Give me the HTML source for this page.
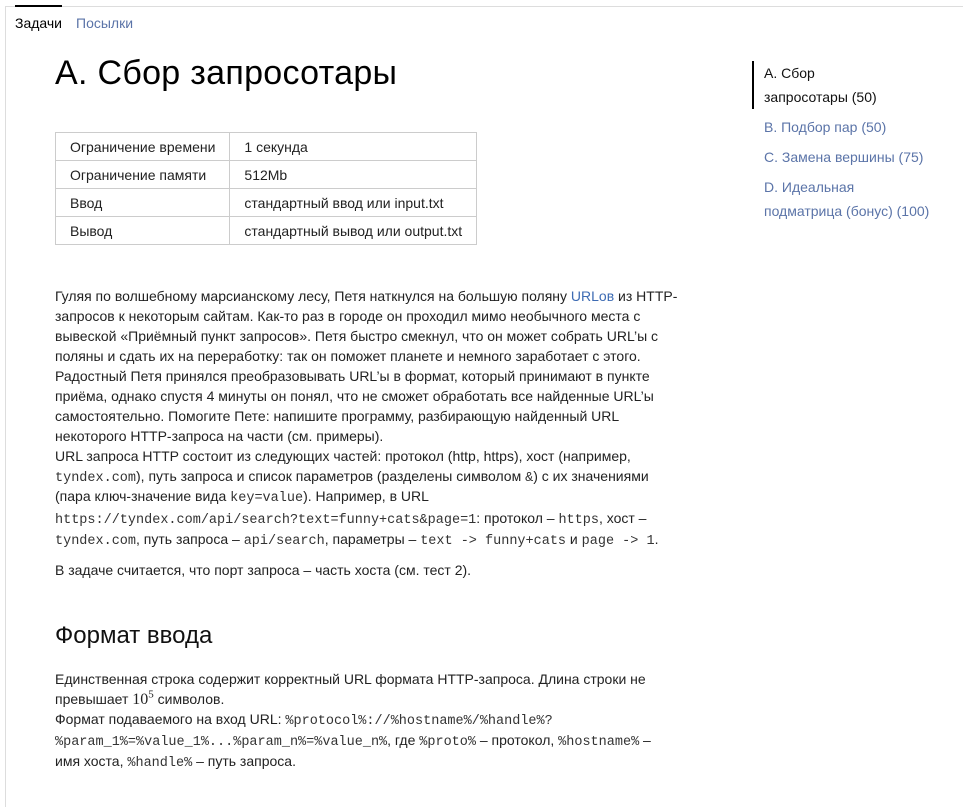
<!DOCTYPE html>
<html><head><meta charset="utf-8"><style>
body{margin:0;background:#fff;font-family:"Liberation Sans",Arial,sans-serif;color:#222;width:963px;height:773px;overflow:hidden;position:relative}
.frame{position:absolute;left:5px;top:6px;width:970px;height:800px;border-left:1px solid #ddd;border-top:1px solid #ddd}
.tabs{position:absolute;left:15px;top:6px;font-size:14px}
.tab{display:inline-block;padding-top:9px;margin-right:14px}
.tab.act{border-top:2px solid #000;margin-top:-1px;padding-top:8px;color:#000}
.tab.lnk{color:#5b74a8}
h1{position:absolute;left:55px;top:54px;margin:0;font-weight:normal;font-size:34px;color:#000;letter-spacing:0.3px}
table{position:absolute;left:55px;top:132px;border-collapse:collapse;font-size:14px}
td{border:1px solid #ccc;height:27px;padding:0 14px;color:#222;white-space:nowrap}
td:first-child{width:145px}
td:last-child{width:218px}
.txt{position:absolute;left:55px;top:286px;font-size:14px;line-height:20px;width:660px;color:#222}
code{font-family:"Liberation Mono",monospace;font-size:13.5px;color:#333;line-height:1}
a{color:#3d6bb3;text-decoration:none}
h2{position:absolute;left:55px;top:622px;margin:0;font-size:24px;font-weight:normal;color:#111}
.txt2{position:absolute;left:55px;top:669px;font-size:14px;line-height:20px;width:660px}
.side{position:absolute;left:752px;top:61px;font-size:14px;line-height:24px}
.side div{padding-left:12px;margin-bottom:6px;color:#5b74a8}
.side .cur{border-left:2px solid #000;padding-left:10px;color:#111}
</style></head><body>
<div class="frame"></div>
<div class="tabs"><span class="tab act">Задачи</span><span class="tab lnk">Посылки</span></div>
<h1>A. Сбор запросотары</h1>
<table>
<tr><td>Ограничение времени</td><td>1 секунда</td></tr>
<tr><td>Ограничение памяти</td><td>512Mb</td></tr>
<tr><td>Ввод</td><td>стандартный ввод или input.txt</td></tr>
<tr><td>Вывод</td><td>стандартный вывод или output.txt</td></tr>
</table>
<div class="txt">
Гуляя по волшебному марсианскому лесу, Петя наткнулся на большую поляну <a>URLов</a> из HTTP-<br>запросов к некоторым сайтам. Как-то раз в городе он проходил мимо необычного места с<br>вывеской «Приёмный пункт запросов». Петя быстро смекнул, что он может собрать URL’ы с<br>поляны и сдать их на переработку: так он поможет планете и немного заработает с этого.<br>Радостный Петя принялся преобразовывать URL’ы в формат, который принимают в пункте<br>приёма, однако спустя 4 минуты он понял, что не сможет обработать все найденные URL’ы<br>самостоятельно. Помогите Пете: напишите программу, разбирающую найденный URL<br>некоторого HTTP-запроса на части (см. примеры).<br>
URL запроса HTTP состоит из следующих частей: протокол (http, https), хост (например,<br><code>tyndex.com</code>), путь запроса и список параметров (разделены символом <code>&amp;</code>) с их значениями<br>(пара ключ-значение вида <code>key=value</code>). Например, в URL<br>
<div style="line-height:21px;margin-top:2px"><code>https://tyndex.com/api/search?text=funny+cats&amp;page=1</code>: протокол – <code>https</code>, хост –<br><code>tyndex.com</code>, путь запроса – <code>api/search</code>, параметры – <code>text -&gt; funny+cats</code> и <code>page -&gt; 1</code>.</div>
<div style="margin-top:10px">В задаче считается, что порт запроса – часть хоста (см. тест 2).</div>
</div>
<h2>Формат ввода</h2>
<div class="txt2">
Единственная строка содержит корректный URL формата HTTP-запроса. Длина строки не<br>превышает <span style="font-family:'Liberation Serif',serif;font-size:16px;line-height:18px">10<sup style="font-size:11px;line-height:0">5</sup></span> символов.<br>
<div style="line-height:21px">Формат подаваемого на вход URL: <code>%protocol%://%hostname%/%handle%?</code><br>
<code>%param_1%=%value_1%...%param_n%=%value_n%</code>, где <code>%proto%</code> – протокол, <code>%hostname%</code> –<br>имя хоста, <code>%handle%</code> – путь запроса.</div>
</div>
<div class="side">
<div class="cur">A. Сбор<br>запросотары (50)</div>
<div>B. Подбор пар (50)</div>
<div>C. Замена вершины (75)</div>
<div>D. Идеальная<br>подматрица (бонус) (100)</div>
</div>
</body></html>
